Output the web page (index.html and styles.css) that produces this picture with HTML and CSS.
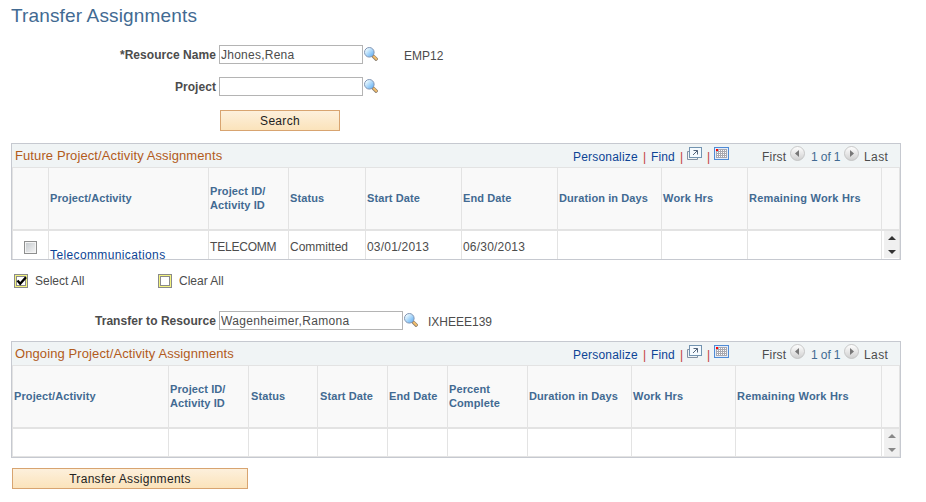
FILE: index.html
```html
<!DOCTYPE html>
<html lang="en">

<head>
    <meta charset="UTF-8">
    <title>Transfer Assignments</title>
    <link rel="stylesheet" href="styles.css">
</head>

<body>
    <!-- shared icons -->
    <svg class="defs" width="0" height="0">
        <defs>
            <linearGradient id="glass" x1="0" y1="0" x2="1" y2="1">
                <stop offset="0.2" stop-color="#e8f8ff" />
                <stop offset="0.9" stop-color="#62b0f4" />
            </linearGradient>
            <linearGradient id="ball" x1="0" y1="0" x2="0" y2="1">
                <stop offset="0" stop-color="#ffffff" />
                <stop offset="1" stop-color="#cfcfcf" />
            </linearGradient>
            <pattern id="cells" x="2" y="2" width="2" height="2" patternUnits="userSpaceOnUse">
                <rect width="2" height="2" fill="#a8a8b0" />
                <rect x="1" y="1" width="1" height="1" fill="#ffffff" />
            </pattern>
        </defs>
        <symbol id="lookup" viewBox="0 0 14 14">
            <path d="M8.5 8.5l4.7 4.7" stroke="#8a7f70" stroke-width="3.4" />
            <path d="M9.3 9l3.6 3.6" stroke="#f5bf6c" stroke-width="2" />
            <circle cx="5.3" cy="5.3" r="4.8" fill="url(#glass)" stroke="#8396b4" />
        </symbol>
        <symbol id="popup" viewBox="0 0 15 13">
            <path d="M3 4.5H0.5v8h10V10" fill="none" stroke="#8391a3" />
            <rect x="2.5" y="0.5" width="12" height="10" fill="#f5fafe" stroke="#7293b0" />
            <path d="M6 8l4.5-4.5M6.5 3.5h4v4" fill="none" stroke="#52647a" />
        </symbol>
        <symbol id="sheet" viewBox="0 0 15 13">
            <rect x="0.5" y="0.5" width="14" height="12" fill="#e4edfa" stroke="#4f8bd6" />
            <rect x="2" y="2" width="11" height="9" fill="url(#cells)" />
            <rect x="2" y="2" width="2" height="2" fill="#ff0000" />
        </symbol>
        <symbol id="prev" viewBox="0 0 15 15">
            <circle cx="7.5" cy="7.5" r="7" fill="url(#ball)" stroke="#bcbcbc" stroke-width="0.8" />
            <path d="M9 4v7L5 7.5z" fill="#777" />
        </symbol>
        <symbol id="next" viewBox="0 0 15 15">
            <circle cx="7.5" cy="7.5" r="7" fill="url(#ball)" stroke="#bcbcbc" stroke-width="0.8" />
            <path d="M6 4v7l4-3.5z" fill="#777" />
        </symbol>
    </svg>

    <div class="page">
        <h1>Transfer Assignments</h1>

        <div class="field">
            <label for="resource">*Resource Name</label>
            <input type="text" id="resource" value="Jhones,Rena">
            <svg class="lookup"><use href="#lookup" /></svg>
            <span class="code">EMP12</span>
        </div>
        <div class="field project">
            <label for="project">Project</label>
            <input type="text" id="project">
            <svg class="lookup"><use href="#lookup" /></svg>
        </div>
        <div class="search">
            <button class="button">Search</button>
        </div>

        <div class="panel">
            <div class="bar">
                <h2>Future Project/Activity Assignments</h2>
                <div class="tools">
                    <a class="personalize">Personalize</a><i>|</i><a class="find">Find</a><i>|</i>
                    <svg class="popup"><use href="#popup" /></svg><i>|</i>
                    <svg class="sheet"><use href="#sheet" /></svg>
                </div>
                <div class="pager">
                    <span class="first">First</span>
                    <svg><use href="#prev" /></svg>
                    <span class="count">1 of 1</span>
                    <svg><use href="#next" /></svg>
                    <span class="last">Last</span>
                </div>
            </div>
            <table class="future">
                <colgroup>
                    <col class="w37"><col class="w160"><col class="w80"><col class="w77"><col class="w96">
                    <col class="w96"><col class="w104"><col class="w86"><col class="w134"><col class="w18">
                </colgroup>
                <tr>
                    <th></th>
                    <th>Project/Activity</th>
                    <th>Project ID/<br>Activity ID</th>
                    <th>Status</th>
                    <th>Start Date</th>
                    <th>End Date</th>
                    <th>Duration in Days</th>
                    <th class="hours">Work Hrs</th>
                    <th class="hours">Remaining Work Hrs</th>
                    <th></th>
                </tr>
                <tr>
                    <td class="pick"><span class="checkbox"></span></td>
                    <td class="name"><a>Telecommunications</a></td>
                    <td class="id">TELECOMM</td>
                    <td>Committed</td>
                    <td class="date">03/01/2013</td>
                    <td class="date">06/30/2013</td>
                    <td></td>
                    <td></td>
                    <td></td>
                    <td class="scroll">
                        <svg><path d="M4 9h8L8 5z" fill="#333" /><path d="M4 19h8l-4 4z" fill="#333" /></svg>
                    </td>
                </tr>
            </table>
        </div>

        <div class="select">
            <svg class="tick" width="14" height="14">
                <rect x="0.5" y="0.5" width="13" height="13" fill="#f4f47e" stroke="#8a8a8a" />
                <rect x="2.5" y="2.5" width="9" height="9" fill="#fff" stroke="#8a8a8a" />
                <path d="M3.5 6.5l2.7 3.2 5.8-6.5" fill="none" stroke="#000" stroke-width="2.4" />
            </svg>
            <span class="all">Select All</span>
            <svg class="tick" width="14" height="14">
                <rect x="0.5" y="0.5" width="13" height="13" fill="#f4f47e" stroke="#8a8a8a" />
                <rect x="2.5" y="2.5" width="9" height="9" fill="#fff" stroke="#8a8a8a" />
            </svg>
            <span>Clear All</span>
        </div>

        <div class="field transfer">
            <label for="target">Transfer to Resource</label>
            <input type="text" id="target" value="Wagenheimer,Ramona">
            <svg class="lookup"><use href="#lookup" /></svg>
            <span class="code">IXHEEE139</span>
        </div>

        <div class="panel">
            <div class="bar">
                <h2>Ongoing Project/Activity Assignments</h2>
                <div class="tools">
                    <a class="personalize">Personalize</a><i>|</i><a class="find">Find</a><i>|</i>
                    <svg class="popup"><use href="#popup" /></svg><i>|</i>
                    <svg class="sheet"><use href="#sheet" /></svg>
                </div>
                <div class="pager">
                    <span class="first">First</span>
                    <svg><use href="#prev" /></svg>
                    <span class="count">1 of 1</span>
                    <svg><use href="#next" /></svg>
                    <span class="last">Last</span>
                </div>
            </div>
            <table class="ongoing">
                <colgroup>
                    <col class="w157"><col class="w80"><col class="w69"><col class="w70"><col class="w60">
                    <col class="w80"><col class="w104"><col class="w104"><col class="w146"><col class="w18">
                </colgroup>
                <tr>
                    <th>Project/Activity</th>
                    <th>Project ID/<br>Activity ID</th>
                    <th class="shift">Status</th>
                    <th class="shift">Start Date</th>
                    <th>End Date</th>
                    <th>Percent<br>Complete</th>
                    <th>Duration in Days</th>
                    <th class="hours">Work Hrs</th>
                    <th class="hours">Remaining Work Hrs</th>
                    <th></th>
                </tr>
                <tr>
                    <td></td>
                    <td></td>
                    <td></td>
                    <td></td>
                    <td></td>
                    <td></td>
                    <td></td>
                    <td></td>
                    <td></td>
                    <td class="scroll">
                        <svg><path d="M4 9h8L8 5z" fill="#888" /><path d="M4 19h8l-4 4z" fill="#888" /></svg>
                    </td>
                </tr>
            </table>
        </div>

        <button class="button wide">Transfer Assignments</button>
    </div>
</body>

</html>
```
FILE: styles.css
```css
body {
    margin: 0;
    background: #fff;
    color: #4c4c4c;
    font-family: "Liberation Sans", Arial, sans-serif;
    font-size: 12px;
}

.defs {
    position: absolute;
}

.page {
    width: 890px;
    padding-left: 11px;
}

h1 {
    height: 38px;
    margin: 0;
    padding-top: 7px;
    color: #426a92;
    font-size: 19px;
    font-weight: normal;
    line-height: 18px;
    letter-spacing: 0.15px;
}

.field {
    display: flex;
    align-items: flex-start;
    height: 32px;
}

.field.project {
    height: 33px;
}

.field.transfer {
    height: 30px;
}

label {
    width: 205px;
    margin-right: 3px;
    font-weight: bold;
    line-height: 20px;
    letter-spacing: 0.05px;
    text-align: right;
}

input {
    width: 144px;
    height: 19px;
    box-sizing: border-box;
    padding: 0 1px;
    border: 1px solid #b4b4b4;
    color: #4c4c4c;
    font: inherit;
    letter-spacing: 0.25px;
}

.transfer input {
    width: 184px;
    letter-spacing: 0.35px;
}

.lookup {
    width: 14px;
    height: 14px;
    margin: 2px 0 0 1px;
}

.code {
    margin-left: 26px;
    line-height: 22px;
}

.transfer .code {
    margin-left: 10px;
}

.search {
    height: 33px;
    padding-left: 209px;
}

.button {
    display: block;
    width: 120px;
    height: 21px;
    padding: 0;
    border: 1px solid #d8a470;
    background: linear-gradient(#fdf0dc, #fbe3bb);
    color: #222;
    font: inherit;
    letter-spacing: 0.3px;
}

.button.wide {
    width: 236px;
    margin: 10px 0 0 1px;
}

.panel {
    height: 117px;
    box-sizing: border-box;
    border: 1px solid #c6c9d0;
    overflow: hidden;
}

.bar {
    display: flex;
    height: 23px;
    background: #f0f4f5;
    border-bottom: 1px solid #e3e3e3;
}

h2 {
    width: 558px;
    margin: 0;
    padding-left: 3px;
    color: #b25b1c;
    font-size: 13px;
    font-weight: normal;
    line-height: 23px;
    letter-spacing: 0.1px;
}

a {
    color: #0d4495;
}

.tools {
    display: flex;
    width: 189px;
    line-height: 27px;
}

.personalize {
    width: 70px;
    letter-spacing: 0.2px;
}

.find {
    width: 29px;
    letter-spacing: 0.1px;
}

.tools i {
    width: 8px;
    color: #c33c3c;
    font-style: normal;
}

.tools svg {
    height: 13px;
    width: 15px;
}

.popup {
    margin: 3px 5px 0 -1px;
}

.sheet {
    margin: 3px 0 0 -1px;
}

.pager {
    display: flex;
    line-height: 27px;
}

.pager svg {
    width: 15px;
    height: 15px;
    margin-top: 2px;
}

.first {
    width: 28px;
    letter-spacing: 0.2px;
}

.count {
    width: 33px;
    padding-left: 6px;
    color: #426a92;
    letter-spacing: -0.1px;
}

.last {
    padding-left: 5px;
    letter-spacing: 0.4px;
}

table {
    width: 888px;
    table-layout: fixed;
    border-collapse: separate;
    border-spacing: 0;
}

th,
td {
    box-sizing: border-box;
    padding: 0 0 0 1px;
    border-right: 1px solid #e3e3e3;
    text-align: left;
    white-space: nowrap;
}

th:first-child,
td:first-child {
    border-left: 1px solid #e3e3e3;
}

th {
    height: 63px;
    padding-bottom: 2px;
    background: #f9f9f9;
    border-bottom: 2px solid #e3e3e3;
    color: #426a92;
    font-size: 11px;
    line-height: 14px;
    letter-spacing: 0.1px;
}

th.hours {
    letter-spacing: 0.22px;
}

th.shift {
    padding-left: 2px;
}

td {
    height: 28px;
    padding-top: 4px;
    vertical-align: top;
    line-height: 24px;
}

.ongoing td {
    border-bottom: 1px solid #e3e3e3;
}

td.name {
    padding-top: 11px;
    line-height: 26px;
    letter-spacing: 0.38px;
}

td.id {
    letter-spacing: -0.2px;
}

td.date {
    letter-spacing: 0.2px;
}

.checkbox {
    display: block;
    width: 11px;
    height: 11px;
    margin: 6px 0 0 10px;
    border: 1px solid #8e8f8f;
    background: linear-gradient(135deg, #c3c8cc, #f6f6f6);
    outline: 1px solid #f4f4f4;
    outline-offset: -2px;
}

td.scroll {
    padding: 0 0 0 2px;
}

.scroll svg {
    display: block;
    width: 15px;
    height: 27px;
    background: #f0f0f0;
}

.select {
    display: flex;
    height: 37px;
    padding: 14px 0 0 3px;
    line-height: 14px;
}

.all {
    width: 123px;
}

.tick {
    margin-right: 7px;
}

.w18 { width: 18px; }
.w37 { width: 37px; }
.w60 { width: 60px; }
.w69 { width: 69px; }
.w70 { width: 70px; }
.w77 { width: 77px; }
.w80 { width: 80px; }
.w86 { width: 86px; }
.w96 { width: 96px; }
.w104 { width: 104px; }
.w134 { width: 134px; }
.w146 { width: 146px; }
.w157 { width: 157px; }
.w160 { width: 160px; }
```
